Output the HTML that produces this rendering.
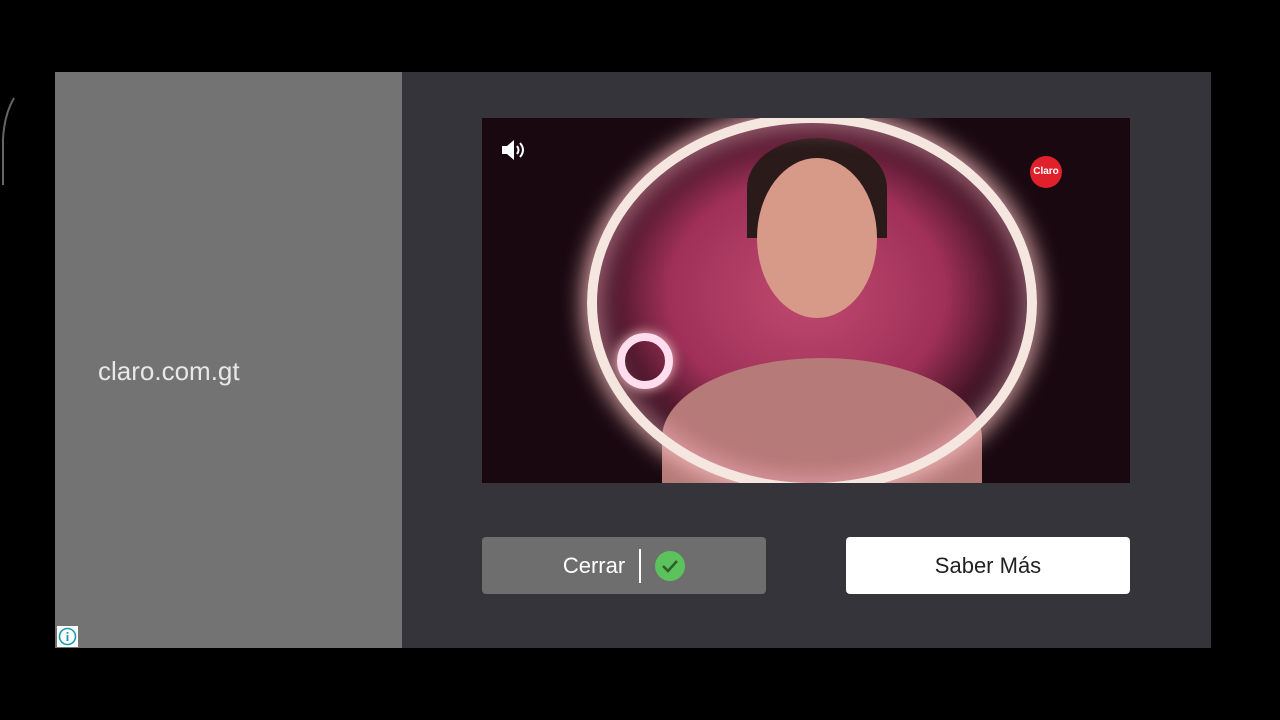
<!DOCTYPE html>
<html><head><meta charset="utf-8"><style>
body{margin:0;width:1280px;height:720px;background:#000;position:relative;overflow:hidden;font-family:"Liberation Sans","DejaVu Sans",sans-serif}
.left{position:absolute;left:55px;top:72px;width:347px;height:576px;background:#737373}
.right{position:absolute;left:402px;top:72px;width:809px;height:576px;background:#35343b}
.site{position:absolute;left:98px;top:356px;color:#e8e8e8;font-size:26px}
.video{position:absolute;left:482px;top:118px;width:648px;height:365px;overflow:hidden;
background:radial-gradient(ellipse 230px 190px at 325px 175px,#c04a70 0%,#a03058 60%,#1a0810 100%),#0d070a}
.ring{position:absolute;left:105px;top:-5px;width:450px;height:380px;border-radius:50%;border:10px solid #f5e6e0;box-shadow:0 0 20px 6px rgba(255,200,200,.7),inset 0 0 20px 6px rgba(255,180,200,.5);box-sizing:border-box}
.face{position:absolute;left:275px;top:40px;width:120px;height:160px;border-radius:50%;background:#d89a88}
.hair{position:absolute;left:265px;top:20px;width:140px;height:100px;border-radius:50% 50% 0 0;background:#2a1a1a}
.body{position:absolute;left:180px;top:240px;width:320px;height:160px;border-radius:50% 50% 0 0;background:#b67a78}
.btn{position:absolute;top:537px;width:284px;height:57px;border-radius:4px;font-size:22px;display:flex;align-items:center;justify-content:center}
.c{left:482px;background:#6e6e6e;color:#fff}
.s{left:846px;background:#fff;color:#222}
</style></head><body>
<svg style="position:absolute;left:0;top:95px" width="20" height="95"><path d="M14 3 Q4 20 3 45 L3 90" stroke="#666" stroke-width="2" fill="none"/></svg>
<div class="left"></div><div class="right"></div>
<div class="site">claro.com.gt</div>
<div class="video">
<div class="body"></div><div class="hair"></div><div class="face"></div>
<div class="ring"></div>
<div style="position:absolute;left:135px;top:215px;width:40px;height:40px;border-radius:50%;border:8px solid #fde;box-shadow:0 0 12px #fcc"></div>
<svg style="position:absolute;left:18px;top:20px" width="28" height="24" viewBox="0 0 28 24"><path d="M2 8h5l7-6v20l-7-6H2z" fill="#fff"/><path d="M17 8q3 4 0 8M20 5q6 7 0 14" stroke="#fff" stroke-width="2" fill="none"/></svg>
<div style="position:absolute;left:548px;top:38px;width:32px;height:32px;border-radius:50%;background:#e0202a;color:#fff;font-size:10px;font-weight:bold;text-align:center;line-height:32px">Claro</div>
</div>
<div class="btn c">Cerrar<span style="width:2px;height:34px;background:#fff;margin:0 14px"></span><svg width="30" height="30"><circle cx="15" cy="15" r="15" fill="#5cc25c"/><path d="M8 15l5 5 9-10" stroke="#2e5e2e" stroke-width="2.5" fill="none"/></svg></div>
<div class="btn s">Saber Más</div>
<svg style="position:absolute;left:57px;top:626px" width="21" height="21"><rect width="21" height="21" fill="#fff"/><circle cx="10.5" cy="10.5" r="8" fill="none" stroke="#1a9bb0" stroke-width="1.6"/><rect x="9.6" y="9" width="1.8" height="6" fill="#1a9bb0"/><rect x="9.6" y="6" width="1.8" height="1.8" fill="#1a9bb0"/></svg>
</body></html>
